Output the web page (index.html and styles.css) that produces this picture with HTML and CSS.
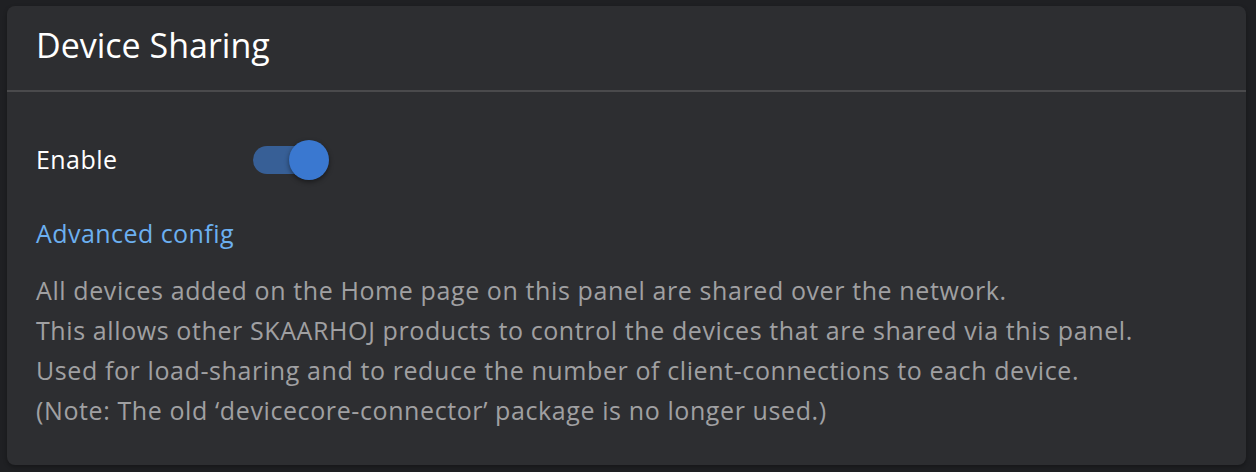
FILE: index.html
```html
<!DOCTYPE html>
<html>
<head>
<meta charset="utf-8">
<link rel="stylesheet" href="styles.css">
</head>
<body>
<div class="card">
  <div class="card-header">Device Sharing</div>
  <div class="card-body">
    <div class="row">
      <span class="label">Enable</span>
      <span class="switch"><span class="track"></span><span class="knob"></span></span>
    </div>
    <a class="link">Advanced config</a>
    <p class="desc">All devices added on the Home page on this panel are shared over the network.<br>This allows other SKAARHOJ products to control the devices that are shared via this panel.<br>Used for load-sharing and to reduce the number of client-connections to each device.<br>(Note: The old ‘devicecore-connector’ package is no longer used.)</p>
  </div>
</div>
</body>
</html>
```
FILE: styles.css
```css
html, body { margin: 0; padding: 0; }
body {
  background: #1f2023;
  width: 1256px;
  height: 472px;
  font-family: "Open Sans", sans-serif;
  padding: 6px 10px 0 7px;
  box-sizing: border-box;
}
.card {
  background: #2d2e31;
  border-radius: 8px;
  height: 459px;
  box-shadow: 0 2px 4px rgba(0,0,0,0.3);
}
.card-header {
  color: #ffffff;
  font-size: 34px;
  line-height: 40px;
  height: 86px;
  box-sizing: border-box;
  padding: 19px 0 0 29px;
  border-bottom: 2px solid #4a4a4c;
}
.card-body { padding: 48px 29px 0 29px; }
.row { display: flex; align-items: center; height: 40px; }
.label { color: #fff; font-size: 25px; letter-spacing: 0.45px; width: 217px; line-height: 34px; margin-top: -2px; }
.switch { position: relative; width: 76px; height: 40px; }
.track { position: absolute; left: 0; top: 6px; width: 62px; height: 28px; border-radius: 14px; background: #375f96; }
.knob { position: absolute; left: 36px; top: 0; width: 40px; height: 40px; border-radius: 50%; background: #3a78d0; box-shadow: 0 2px 5px rgba(0,0,0,0.45); }
.link { display: block; color: #6cb0f0; font-size: 25px; letter-spacing: 0.45px; line-height: 36.5px; margin-top: 35px; }
.desc { color: #a0a0a2; font-size: 25px; letter-spacing: 0.6px; line-height: 40.3px; margin: 18px 0 0 0; }
```
